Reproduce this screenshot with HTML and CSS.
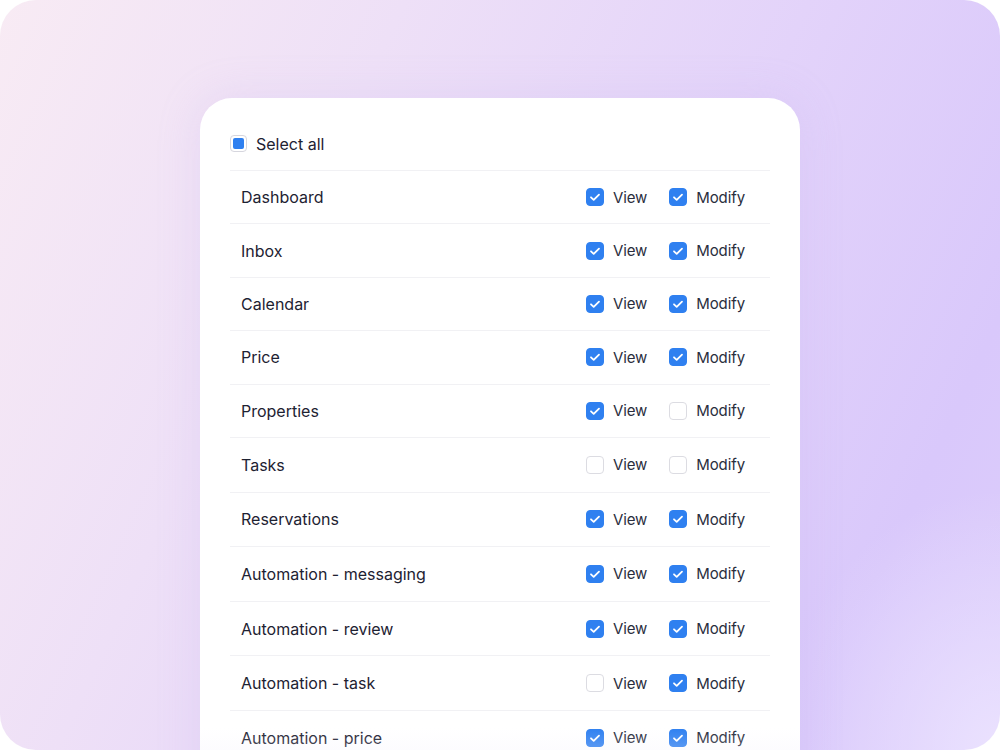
FILE: index.html
```html
<!DOCTYPE html>
<html>
<head>
<meta charset="utf-8">
<link rel="stylesheet" href="styles.css">
</head>
<body>
<div class="stage">
  <div class="card">
    <div class="row select-row">
      <span class="box partial"><span class="dot"></span></span>
      <span class="select-label">Select all</span>
    </div>
    <div class="row short"><span class="name">Dashboard</span><div class="perms"><span class="perm"><span class="box on"><svg viewBox="0 0 18 18"><path d="M5 9.3l2.7 2.6L13 6.6"/></svg></span>View</span><span class="perm"><span class="box on"><svg viewBox="0 0 18 18"><path d="M5 9.3l2.7 2.6L13 6.6"/></svg></span>Modify</span></div></div>
    <div class="row short"><span class="name">Inbox</span><div class="perms"><span class="perm"><span class="box on"><svg viewBox="0 0 18 18"><path d="M5 9.3l2.7 2.6L13 6.6"/></svg></span>View</span><span class="perm"><span class="box on"><svg viewBox="0 0 18 18"><path d="M5 9.3l2.7 2.6L13 6.6"/></svg></span>Modify</span></div></div>
    <div class="row short"><span class="name">Calendar</span><div class="perms"><span class="perm"><span class="box on"><svg viewBox="0 0 18 18"><path d="M5 9.3l2.7 2.6L13 6.6"/></svg></span>View</span><span class="perm"><span class="box on"><svg viewBox="0 0 18 18"><path d="M5 9.3l2.7 2.6L13 6.6"/></svg></span>Modify</span></div></div>
    <div class="row short"><span class="name">Price</span><div class="perms"><span class="perm"><span class="box on"><svg viewBox="0 0 18 18"><path d="M5 9.3l2.7 2.6L13 6.6"/></svg></span>View</span><span class="perm"><span class="box on"><svg viewBox="0 0 18 18"><path d="M5 9.3l2.7 2.6L13 6.6"/></svg></span>Modify</span></div></div>
    <div class="row short"><span class="name">Properties</span><div class="perms"><span class="perm"><span class="box on"><svg viewBox="0 0 18 18"><path d="M5 9.3l2.7 2.6L13 6.6"/></svg></span>View</span><span class="perm"><span class="box"></span>Modify</span></div></div>
    <div class="row"><span class="name">Tasks</span><div class="perms"><span class="perm"><span class="box"></span>View</span><span class="perm"><span class="box"></span>Modify</span></div></div>
    <div class="row"><span class="name">Reservations</span><div class="perms"><span class="perm"><span class="box on"><svg viewBox="0 0 18 18"><path d="M5 9.3l2.7 2.6L13 6.6"/></svg></span>View</span><span class="perm"><span class="box on"><svg viewBox="0 0 18 18"><path d="M5 9.3l2.7 2.6L13 6.6"/></svg></span>Modify</span></div></div>
    <div class="row"><span class="name">Automation - messaging</span><div class="perms"><span class="perm"><span class="box on"><svg viewBox="0 0 18 18"><path d="M5 9.3l2.7 2.6L13 6.6"/></svg></span>View</span><span class="perm"><span class="box on"><svg viewBox="0 0 18 18"><path d="M5 9.3l2.7 2.6L13 6.6"/></svg></span>Modify</span></div></div>
    <div class="row"><span class="name">Automation - review</span><div class="perms"><span class="perm"><span class="box on"><svg viewBox="0 0 18 18"><path d="M5 9.3l2.7 2.6L13 6.6"/></svg></span>View</span><span class="perm"><span class="box on"><svg viewBox="0 0 18 18"><path d="M5 9.3l2.7 2.6L13 6.6"/></svg></span>Modify</span></div></div>
    <div class="row"><span class="name">Automation - task</span><div class="perms"><span class="perm"><span class="box"></span>View</span><span class="perm"><span class="box on"><svg viewBox="0 0 18 18"><path d="M5 9.3l2.7 2.6L13 6.6"/></svg></span>Modify</span></div></div>
    <div class="row"><span class="name">Automation - price</span><div class="perms"><span class="perm"><span class="box on"><svg viewBox="0 0 18 18"><path d="M5 9.3l2.7 2.6L13 6.6"/></svg></span>View</span><span class="perm"><span class="box on"><svg viewBox="0 0 18 18"><path d="M5 9.3l2.7 2.6L13 6.6"/></svg></span>Modify</span></div></div>
    <div class="fade"></div>
  </div>
</div>
</body>
</html>
```
FILE: styles.css
```css
html, body {
  margin: 0;
  padding: 0;
  background: #ffffff;
}
body {
  font-family: Inter, "Noto Sans", "Liberation Sans", sans-serif;
  color: #1e2232;
}
.stage {
  width: 1000px;
  height: 750px;
  border-radius: 36px;
  overflow: hidden;
  position: relative;
  background:
    radial-gradient(ellipse 220px 260px at 100% 100%, rgba(236, 228, 255, 0.9), rgba(236, 228, 255, 0) 100%),
    linear-gradient(115deg, #f8ebf4 0%, #eee0f7 30%, #e3d3fa 60%, #d9c8fb 85%, #dccdfb 100%);
  padding-top: 98px;
  box-sizing: border-box;
}
.card {
  position: relative;
  margin-left: 200px;
  width: 600px;
  height: 700px;
  background: #ffffff;
  border-radius: 32px 32px 0 0;
  padding: 19px 30px 0;
  box-sizing: border-box;
  box-shadow: 0 0 40px rgba(200, 180, 240, 0.25);
}
.row {
  display: flex;
  align-items: center;
  height: 54.6px;
  border-bottom: 1px solid #f1f1f4;
  box-sizing: border-box;
  padding: 0 25px 0 11px;
  font-size: 16px;
}
.row.short {
  height: 53.4px;
}
.select-row {
  height: 54px;
  padding-left: 0;
  gap: 9px;
}
.select-label {
  font-size: 16px;
}
.name {
  flex: 1;
}
.perms {
  display: flex;
  align-items: center;
  gap: 22px;
}
.perm {
  display: flex;
  align-items: center;
  gap: 9px;
  font-size: 15px;
  letter-spacing: -0.1px;
  color: #2a2e3d;
}
.box {
  width: 18px;
  height: 18px;
  border-radius: 4px;
  border: 1px solid #dcdce2;
  box-sizing: border-box;
  background: #fff;
  display: flex;
  align-items: center;
  justify-content: center;
}
.box.on {
  background: #2f80f0;
  border-color: #2f80f0;
}
.box svg {
  width: 18px;
  height: 18px;
  flex: none;
}
.box svg path {
  fill: none;
  stroke: #fff;
  stroke-width: 1.8;
  stroke-linecap: round;
  stroke-linejoin: round;
}
.box.partial {
  width: 17px;
  height: 17px;
  border-color: #d6d6de;
}
.dot {
  width: 11px;
  height: 11px;
  border-radius: 2px;
  background: #2f80f0;
}
.fade {
  position: absolute;
  left: 0;
  right: 0;
  top: 600px;
  height: 100px;
  background: linear-gradient(180deg, rgba(246, 244, 252, 0) 0%, rgba(246, 244, 252, 0) 30%, rgba(244, 242, 252, 0.75) 100%);
  pointer-events: none;
}
```
